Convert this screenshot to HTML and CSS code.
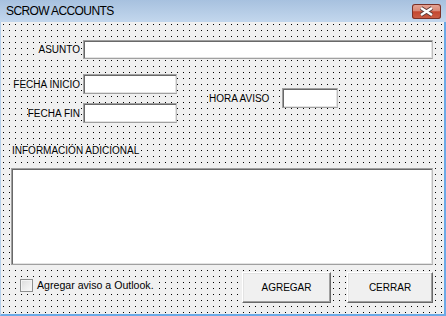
FILE: index.html
```html
<!DOCTYPE html>
<html lang="es">
<head>
    <meta charset="UTF-8">
    <title>SCROW ACCOUNTS</title>
    <link rel="stylesheet" href="styles.css">
</head>
<body>
    <div class="window">
        <div class="titlebar">
            <span class="title">SCROW ACCOUNTS</span>
            <button class="close" type="button">
                <svg width="29" height="15" viewBox="0 0 29 15">
                    <path d="M9 4 L20 11 M20 4 L9 11" stroke="#5a3b38" stroke-width="4.2" fill="none"/>
                    <path d="M9 4 L20 11 M20 4 L9 11" stroke="#ffffff" stroke-width="2.4" fill="none"/>
                </svg>
            </button>
        </div>
        <div class="client">
            <div class="row-asunto">
                <label class="lbl"><span>ASUNTO</span></label>
                <input class="field asunto" type="text">
            </div>

            <div class="dates">
                <div class="date-grid">
                    <label class="lbl"><span>FECHA INICIO</span></label>
                    <input class="field fecha" type="text">
                    <label class="lbl"><span>FECHA FIN</span></label>
                    <input class="field fecha" type="text">
                </div>
                <div class="hora">
                    <label class="hora-lbl"><span>HORA AVISO</span></label>
                    <input class="field hora-input" type="text">
                </div>
            </div>

            <div class="info-lbl"><span>INFORMACIÓN ADICIONAL</span></div>
            <textarea class="field info"></textarea>

            <div class="footer">
                <label class="check"><span class="box"></span><span class="check-text">Agregar aviso a Outlook.</span></label>
                <button class="btn agregar" type="button">AGREGAR</button>
                <button class="btn cerrar" type="button">CERRAR</button>
            </div>
        </div>
    </div>
</body>
</html>
```

FILE: styles.css
```css
body {
    margin: 0;
    background: #f0f0f0;
    font-family: "Liberation Sans", Arial, sans-serif;
    font-size: 10px;
    color: #000;
}

.window {
    width: 446px;
    height: 316px;
    display: flex;
    flex-direction: column;
}

/* barra de título */
.titlebar {
    height: 22px;
    display: flex;
    align-items: flex-start;
    background: linear-gradient(to bottom, #a7c1df, #c3d7ed);
}
.title {
    margin: 4px 0 0 6px;
    font-size: 12px;
    line-height: 15px;
    letter-spacing: -0.6px;
    color: #000;
}
.close {
    margin: 4px 0 0 auto;
    margin-right: 5px;
    width: 29px;
    height: 15px;
    padding: 0;
    border: none;
    border-radius: 3px;
    box-shadow: inset 0 0 0 1px #7a3128;
    background: linear-gradient(to bottom, #e7a899 0%, #d98a78 45%, #c4472f 52%, #cc6148 100%);
    overflow: hidden;
}
.close svg {
    display: block;
}

/* área del formulario con la rejilla de puntos (1px cada 6px) */
.client {
    flex: 1;
    border-left: 1px solid #b6cfea;
    border-right: 2px solid #6aaae6;
    border-bottom: 2px solid #6aaae6;
    background-color: #000;
    background-image:
        linear-gradient(to right, transparent 1px, #f0f0f0 1px),
        linear-gradient(to bottom, transparent 1px, #f0f0f0 1px);
    background-size: 6px 6px;
    background-position: 2px 2px;
}

.field {
    box-sizing: border-box;
    margin: 0;
    padding: 0;
    background: #fff;
    border-style: solid;
    border-width: 1px;
    border-color: #a0a0a0 #bdbdbd #a0a0a0 #a0a0a0;
    box-shadow: inset 1px 1px 0 #696969, inset -1px -1px 0 #e3e3e3;
    font-family: inherit;
    font-size: 11px;
}

.lbl {
    text-align: right;
    line-height: 13px;
}
.lbl span,
.hora-lbl span,
.info-lbl span {
    background: #f0f0f0;
}

.row-asunto {
    display: flex;
    align-items: center;
    margin-top: 18px;
}
.row-asunto .lbl {
    width: 79px;
    margin-right: 3px;
}
.asunto {
    width: 350px;
    height: 19px;
}

.dates {
    display: flex;
    margin-top: 15px;
}
.date-grid {
    display: grid;
    grid-template-columns: 79px 94px;
    grid-auto-rows: 20px;
    column-gap: 3px;
    row-gap: 9px;
    align-items: center;
}
.fecha {
    width: 94px;
    height: 20px;
}
.hora {
    display: flex;
    align-items: center;
    margin: 14px 0 0 32px;
    height: 20px;
}
.hora-lbl {
    width: 73px;
    line-height: 13px;
}
.hora-input {
    width: 56px;
    height: 20px;
}

.info-lbl {
    margin: 21px 0 0 11px;
    line-height: 13px;
}
.info {
    display: block;
    margin: 11px 0 0 10px;
    width: 422px;
    height: 97px;
    resize: none;
}

.footer {
    display: flex;
    align-items: flex-start;
    margin-top: 7px;
    padding-right: 11px;
}
.check {
    display: flex;
    align-items: center;
    margin: 7px 0 0 19px;
    font-size: 10.6px;
    line-height: 13px;
    background: #f0f0f0;
}
.box {
    box-sizing: border-box;
    width: 13px;
    height: 13px;
    margin-right: 4px;
    border: 1px solid #8e8f8f;
    background: linear-gradient(135deg, #dcdcdc, #fbfbfb);
    box-shadow: inset 0 0 0 1px #f4f4f4;
}
.btn {
    box-sizing: border-box;
    height: 31px;
    padding: 0;
    background: #f0f0f0;
    border-style: solid;
    border-width: 1px;
    border-color: #ffffff #696969 #696969 #ffffff;
    box-shadow: inset -1px -1px 0 #a0a0a0, inset 1px 1px 0 #e3e3e3;
    font-family: inherit;
    font-size: 10px;
    color: #000;
}
.agregar {
    width: 89px;
    margin-left: auto;
}
.cerrar {
    width: 86px;
    margin-left: 16px;
}
```
